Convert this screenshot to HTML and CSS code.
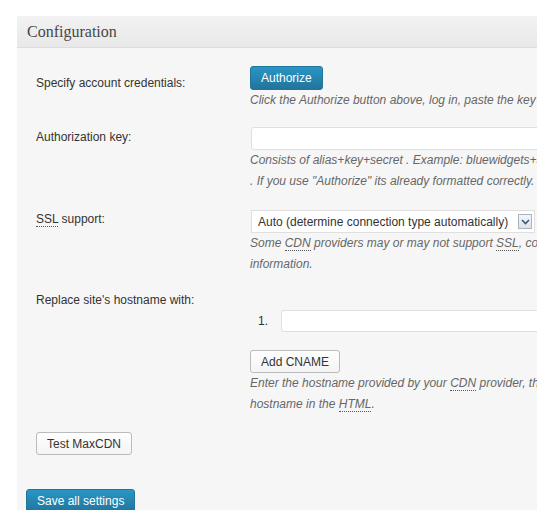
FILE: index.html
```html
<!DOCTYPE html>
<html>
<head>
<meta charset="utf-8">
<link rel="stylesheet" href="styles.css">
</head>
<body>
<div class="panel">
  <h3 class="panel-head">Configuration</h3>
  <div class="panel-body">
    <div class="row row-first">
      <div class="label label-first">Specify account credentials:</div>
      <div class="field">
        <button class="btn btn-primary">Authorize</button>
        <p class="desc">Click the Authorize button above, log in, paste the key below and save settings.</p>
      </div>
    </div>
    <div class="row row-key">
      <div class="label label-key">Authorization key:</div>
      <div class="field">
        <input class="text-input key-input" type="text">
        <p class="desc">Consists of alias+key+secret . Example: bluewidgets+asd897asd98a7sd+798a7sd98<br>. If you use "Authorize" its already formatted correctly.</p>
      </div>
    </div>
    <div class="row row-ssl">
      <div class="label label-ssl"><abbr>SSL</abbr> support:</div>
      <div class="field">
        <div class="select-wrap">
          <select class="select">
            <option>Auto (determine connection type automatically)</option>
          </select>
          <span class="select-arrow"><svg width="9" height="6" viewBox="0 0 9 6"><path d="M1 1 L4.5 4.5 L8 1" fill="none" stroke="#3b5a7a" stroke-width="1.6"/></svg></span>
        </div>
        <p class="desc">Some <abbr>CDN</abbr> providers may or may not support <abbr>SSL</abbr>, contact your vendor for more<br>information.</p>
      </div>
    </div>
    <div class="row row-host">
      <div class="label">Replace site's hostname with:</div>
      <div class="field field-host">
        <ol class="cname-list">
          <li class="cname-item"><span class="cname-num">1.</span><input class="text-input cname-input" type="text"></li>
        </ol>
        <button class="btn btn-secondary">Add CNAME</button>
        <p class="desc">Enter the hostname provided by your <abbr>CDN</abbr> provider, this value will replace your site's<br>hostname in the <abbr>HTML</abbr>.</p>
      </div>
    </div>
    <div class="test-row">
      <button class="btn btn-secondary btn-test">Test MaxCDN</button>
    </div>
  </div>
  <div class="panel-foot">
    <button class="btn btn-primary btn-save">Save all settings</button>
  </div>
</div>
</body>
</html>
```
FILE: styles.css
```css
html, body {
  margin: 0;
  padding: 0;
  background: #ffffff;
}

body {
  font-family: "Liberation Sans", Arial, sans-serif;
  font-size: 12px;
  color: #333333;
}

.panel {
  margin: 16px 0 0 17px;
  width: 520px;
  height: 494px;
  overflow: hidden;
  background: #f6f6f6;
}

.panel-head {
  margin: 0;
  height: 31px;
  padding-left: 10px;
  border-bottom: 1px solid #dcdcdc;
  background: linear-gradient(#f2f2f2, #e8e8e8);
  font-family: "Liberation Serif", Georgia, serif;
  font-weight: normal;
  font-size: 16px;
  line-height: 31px;
  color: #464646;
}

.panel-body {
  padding: 18px 0 0 19px;
}

.row {
  display: grid;
  grid-template-columns: 214px 1fr;
}

.label {
  line-height: 16px;
  color: #333333;
  white-space: nowrap;
}

.label-first { padding-top: 9px; }
.label-key { padding-top: 2px; }
.label-ssl { padding-top: 1px; }

.row-key { margin-top: 16px; }
.row-ssl { margin-top: 18px; }
.row-host { margin-top: 17px; }

.field {
  min-width: 0;
}

.desc {
  margin: 0;
  font-style: italic;
  color: #666666;
  line-height: 21px;
  white-space: nowrap;
}

abbr {
  text-decoration: none;
  border-bottom: 1px dotted #555555;
}

.btn {
  display: block;
  height: 24px;
  padding: 0 10px;
  border-radius: 3px;
  font-family: "Liberation Sans", Arial, sans-serif;
  font-size: 12px;
  line-height: 22px;
  white-space: nowrap;
  cursor: pointer;
}

.btn-primary {
  border: 1px solid #21759b;
  background: linear-gradient(#2a95c5, #21759b);
  color: #ffffff;
}

.btn-secondary {
  height: 23px;
  border: 1px solid #bbbbbb;
  background: linear-gradient(#fefefe, #f4f4f4);
  color: #333333;
}

.text-input {
  display: block;
  box-sizing: border-box;
  margin: 0 0 0 1px;
  height: 23px;
  border: 1px solid #dfdfdf;
  border-radius: 3px;
  background: #ffffff;
}

.key-input {
  width: 320px;
}

.select-wrap {
  position: relative;
  width: 284px;
  margin-left: 1px;
}

.select {
  display: block;
  width: 284px;
  height: 23px;
  margin: 0;
  padding: 0 0 0 6px;
  border: 1px solid #dfdfdf;
  border-radius: 0;
  background: #ffffff;
  -webkit-appearance: none;
  appearance: none;
  font-family: "Liberation Sans", Arial, sans-serif;
  font-size: 12px;
  color: #333333;
}

.select-arrow {
  position: absolute;
  top: 4px;
  right: 3px;
  box-sizing: border-box;
  width: 14px;
  height: 15px;
  border: 1px solid #a9b4c2;
  background: linear-gradient(#f4f6f8, #dde3ea);
  display: flex;
  align-items: center;
  justify-content: center;
}

.field-host {
  padding-top: 18px;
}

.cname-list {
  margin: 0;
  padding: 0;
  list-style: none;
}

.cname-item {
  display: flex;
  align-items: center;
}

.cname-num {
  flex: none;
  box-sizing: border-box;
  width: 31px;
  padding-left: 8px;
}

.cname-input {
  flex: none;
  margin: 0;
  height: 22px;
  width: 300px;
}

.field-host .btn-secondary {
  margin-top: 18px;
}

.test-row {
  margin-top: 17px;
}

.panel-foot {
  padding: 34px 0 0 9px;
}
```
